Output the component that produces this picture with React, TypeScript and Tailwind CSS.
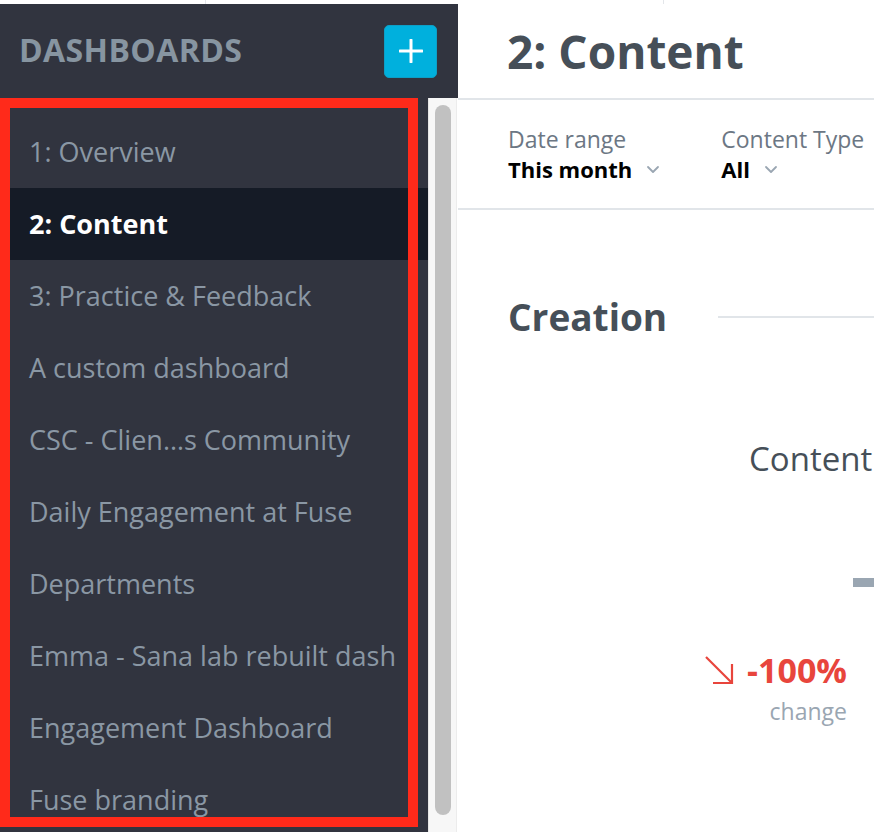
import React from 'react'

const dashboards = [
  '1: Overview',
  '2: Content',
  '3: Practice & Feedback',
  'A custom dashboard',
  'CSC - Clien…s Community',
  'Daily Engagement at Fuse',
  'Departments',
  'Emma - Sana lab rebuilt dash',
  'Engagement Dashboard',
  'Fuse branding',
]

const font = { fontFamily: '"Open Sans", "Noto Sans", sans-serif' }

function Chevron() {
  return (
    <svg className="w-[14px] h-[14px] ml-[14px]" viewBox="0 0 14 14" fill="none" stroke="#9aa6b2" strokeWidth={1.8}>
      <path d="M2 5l5 5 5-5" strokeLinecap="round" strokeLinejoin="round" />
    </svg>
  )
}

export default function App() {
  return (
    <div className="w-[874px] h-[832px] overflow-hidden bg-white flex flex-col" style={font}>
      {/* top strip */}
      <div className="h-[4px] flex flex-shrink-0">
        <div className="w-[205px]" />
        <div className="w-px bg-[#e3e6ea]" />
        <div className="w-[457px]" />
        <div className="w-px bg-[#e3e6ea]" />
      </div>

      <div className="flex flex-1 min-h-0">
        {/* Sidebar */}
        <div className="w-[458px] flex flex-col flex-shrink-0">
          <div className="h-[94px] bg-[#31343f] flex items-center justify-between pl-[19px] pr-[21px] flex-shrink-0">
            <span className="text-[32px] leading-[40px] font-bold tracking-[0.4px] text-[#8795a1] mt-[-2px]">DASHBOARDS</span>
            <button
              type="button"
              className="w-[53px] h-[53px] rounded-[5px] bg-[#00b0dd] border border-[#0d9fc6] flex items-center justify-center"
            >
              <svg className="w-[24px] h-[24px]" viewBox="0 0 24 24" fill="none" stroke="white" strokeWidth={3}>
                <path d="M12 1v22M1 12h22" strokeLinecap="round" />
              </svg>
            </button>
          </div>

          <div className="flex flex-1 min-h-0">
            {/* List */}
            <div className="relative w-[428px] bg-[#31343f] overflow-hidden pt-[18px]">
              {dashboards.map((name) => {
                const active = name === '2: Content'
                return (
                  <div
                    key={name}
                    className={[
                      'h-[72px] flex items-center pl-[29px] text-[27px] whitespace-nowrap',
                      active ? 'bg-[#151b26] text-white font-bold' : 'text-[#8a97a4]',
                    ].join(' ')}
                  >
                    {name}
                  </div>
                )
              })}
              {/* highlight box */}
              <div className="absolute left-0 top-0 w-[418px] h-[729px] border-[10px] border-[#ff2a1a] pointer-events-none" />
            </div>

            {/* Scrollbar */}
            <div className="w-[29px] bg-[#f7f7f7] border-l border-[#e6e6e6] border-r border-r-[#ececec] flex justify-center pt-[7px]">
              <div className="w-[16px] h-[710px] rounded-full bg-[#c1c1c1]" />
            </div>
          </div>
        </div>

        {/* Main */}
        <div className="flex-1 flex flex-col min-w-0">
          <div className="h-[96px] border-b-2 border-[#e1e5e9] flex items-center pl-[49px] flex-shrink-0">
            <h1 className="text-[46px] leading-[56px] font-bold text-[#464f58] whitespace-nowrap">2: Content</h1>
          </div>
          <div className="h-[110px] border-b-2 border-[#e1e5e9] flex items-start pl-[50px] pt-[24px] gap-[61px] flex-shrink-0 whitespace-nowrap">
            <div className="flex flex-col">
              <span className="text-[23px] text-[#6c7784] leading-[30px]">Date range</span>
              <span className="flex items-center text-[22px] font-bold text-black leading-[30px]">
                This month <Chevron />
              </span>
            </div>
            <div className="flex flex-col">
              <span className="text-[23px] text-[#6c7784] leading-[30px]">Content Type</span>
              <span className="flex items-center text-[22px] font-bold text-black leading-[30px]">
                All <Chevron />
              </span>
            </div>
          </div>

          <div className="flex items-center pl-[50px] pt-[85px] flex-shrink-0">
            <h2 className="text-[37px] leading-[44px] font-bold text-[#464f58] whitespace-nowrap">Creation</h2>
            <div className="flex-1 h-[2px] bg-[#e1e5e9] ml-[51px]" />
          </div>

          <div className="pl-[291px] pt-[100px] text-[33px] leading-[40px] text-[#464f58] whitespace-nowrap">Content</div>

          <div className="flex justify-end pt-[99px]">
            <div className="w-[21px] h-[9px] bg-[#9aa6b2]" />
          </div>

          <div className="flex flex-col items-end pr-[27px] pt-[63px]">
            <div className="flex items-center text-[34px] font-bold text-[#e8453c] leading-[40px]">
              <svg className="w-[30px] h-[30px] mr-[13px]" viewBox="0 0 30 30" fill="none" stroke="#e8453c" strokeWidth={2.2}>
                <path d="M2 2l26 26M28 9v19H9" />
              </svg>
              -100%
            </div>
            <span className="text-[23px] text-[#9aa6b2] leading-[28px] mt-[7px]">change</span>
          </div>
        </div>
      </div>
    </div>
  )
}
